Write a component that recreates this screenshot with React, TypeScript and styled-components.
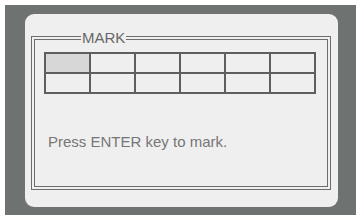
import React from "react";
import styled, { createGlobalStyle } from "styled-components";

const Global = createGlobalStyle`
  html, body { margin: 0; padding: 0; background: #ffffff; overflow: hidden; }
  body { font-family: "Liberation Sans", Arial, sans-serif; }
`;

const Page = styled.div`
  padding: 5px 0 0 5px;
  width: 356px;
  height: 215px;
  box-sizing: border-box;
`;

const Backdrop = styled.div`
  background: #6e7371;
  width: 351px;
  height: 210px;
  box-sizing: border-box;
  padding: 9px 0 0 20px;
`;

const Panel = styled.div`
  width: 313px;
  height: 193px;
  box-sizing: border-box;
  background: #efefef;
  border-radius: 9px;
  padding: 15px 7px 17px 6px;
  display: flex;
  flex-direction: column;
`;

const Frame = styled.fieldset`
  flex: 1;
  margin: 0;
  min-width: 0;
  border: 4px double #6d6d6d;
  padding: 6px 9px 0 9px;
  display: flex;
  flex-direction: column;
`;

const Legend = styled.legend`
  margin-left: 37px;
  padding: 0 1px;
  font-size: 15px;
  line-height: 17px;
  color: #686868;
`;

const Grid = styled.div`
  display: grid;
  grid-template-columns: repeat(6, 43px);
  grid-auto-rows: 18px;
  gap: 2px;
  padding: 2px;
  background: #5e5e5e;
  width: max-content;
`;

const Cell = styled.div<{ $active?: boolean }>`
  background: ${(p) => (p.$active ? "#d7d7d7" : "#efefef")};
`;

const Hint = styled.div`
  margin: 39px 0 0 4px;
  font-size: 15px;
  line-height: 17px;
  color: #767676;
`;

export default function App() {
  const cells = Array.from({ length: 12 }, (_, i) => i);
  return (
    <>
      <Global />
      <Page>
        <Backdrop>
          <Panel>
            <Frame>
              <Legend>MARK</Legend>
              <Grid>
                {cells.map((i) => (
                  <Cell key={i} $active={i === 0} />
                ))}
              </Grid>
              <Hint>Press ENTER key to mark.</Hint>
            </Frame>
          </Panel>
        </Backdrop>
      </Page>
    </>
  );
}
